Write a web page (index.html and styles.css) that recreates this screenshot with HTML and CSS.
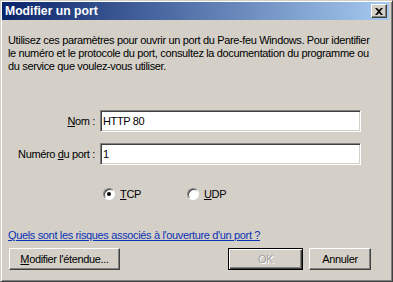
FILE: index.html
```html
<!DOCTYPE html>
<html lang="fr">
<head>
  <meta charset="UTF-8" />
  <title>Modifier un port</title>
  <link rel="stylesheet" href="styles.css">
</head>
<body>
<div class="window">
  <div class="titlebar">
    <span class="title">Modifier un port</span>
    <span class="close-btn">
      <svg width="8" height="7" viewBox="0 0 8 7"><path d="M0 0h2l2 2 2-2h2L5 3.5 8 7H6L4 5 2 7H0l3-3.5z" fill="#000"/></svg>
    </span>
  </div>

  <div class="content">
    <p class="intro">Utilisez ces paramètres pour ouvrir un port du Pare-feu Windows. Pour identifier le numéro et le protocole du port, consultez la documentation du programme ou du service que voulez-vous utiliser.</p>

    <div class="form">
      <label class="lbl"><u>N</u>om :</label>
      <div class="field">HTTP 80</div>
      <label class="lbl">Numéro <u>d</u>u port :</label>
      <div class="field">1</div>
    </div>

    <div class="radios">
      <span class="radio"><span class="dot checked"></span><span><u>T</u>CP</span></span>
      <span class="radio"><span class="dot"></span><span><u>U</u>DP</span></span>
    </div>

    <a href="#" class="link">Quels sont les risques associés à l'ouverture d'un port ?</a>

    <div class="buttons">
      <button class="btn wide"><u>M</u>odifier l'étendue...</button>
      <div class="right">
        <button class="btn default" disabled>OK</button>
        <button class="btn cancel">Annuler</button>
      </div>
    </div>
  </div>
</div>
</body>
</html>
```

FILE: styles.css
```css
body{
  margin:0;
  background:#d4d0c8;
  font-family:"Liberation Sans",Arial,sans-serif;
  font-size:11px;
  letter-spacing:-0.35px;
  color:#000;
}
.window{
  width:393px;
  height:282px;
  box-sizing:border-box;
  background:#d4d0c8;
  border-top:1px solid #d4d0c8;
  border-left:1px solid #d4d0c8;
  border-right:1px solid #404040;
  border-bottom:1px solid #404040;
  box-shadow:inset 1px 1px 0 #fff,inset -1px -1px 0 #808080;
  padding:1px 3px 3px 1px;
  display:flex;
  flex-direction:column;
}
.titlebar{
  height:18px;
  display:flex;
  align-items:center;
  justify-content:space-between;
  padding:0 2px 0 3px;
  background:linear-gradient(90deg,#0a246a 0%,#a6caf0 100%);
}
.title{color:#fff;font-weight:bold;font-size:12.2px;letter-spacing:0}
.close-btn{
  width:16px;height:14px;box-sizing:border-box;
  background:#d4d0c8;
  border-top:1px solid #fff;border-left:1px solid #fff;
  border-right:1px solid #404040;border-bottom:1px solid #404040;
  box-shadow:inset -1px -1px 0 #808080;
  display:flex;align-items:center;justify-content:center;
}
.content{padding:14px 6px 0 6px;flex:1;display:flex;flex-direction:column}
.intro{margin:0;line-height:13px;width:371px}
.form{
  margin-top:37px;
  display:grid;
  grid-template-columns:87px 261px;
  column-gap:5px;
  row-gap:11px;
  align-items:center;
}
.lbl{text-align:right}
.field{
  height:22px;box-sizing:border-box;
  background:#fff;
  border-top:1px solid #808080;border-left:1px solid #808080;
  border-right:1px solid #fff;border-bottom:1px solid #fff;
  box-shadow:inset 1px 1px 0 #404040,inset -1px -1px 0 #d4d0c8;
  padding:3px 2px;
  line-height:15px;
}
.radios{display:flex;gap:46px;margin:23px 0 0 95px}
.radio{display:flex;align-items:center;gap:5px}
.dot{
  width:12px;height:12px;box-sizing:border-box;border-radius:50%;
  background:#fff;
  border:1px solid;border-color:#808080 #fff #fff #808080;
  box-shadow:inset 1px 1px 0 #404040;
  display:flex;align-items:center;justify-content:center;
}
.dot.checked::after{content:"";width:4px;height:4px;border-radius:50%;background:#000}
.link{color:#0a32b4;margin-top:29px;align-self:flex-start}
.buttons{display:flex;justify-content:space-between;margin-top:7px}
.right{display:flex;gap:6px;margin-right:12px}
.btn{
  font:inherit;letter-spacing:inherit;
  height:22px;min-width:62px;
  background:#d4d0c8;
  border:1px solid;border-color:#fff #404040 #404040 #fff;
  box-shadow:inset -1px -1px 0 #808080;
  padding:0 6px;
  color:#000;
}
.btn.wide{width:111px;margin-left:1px}
.btn.default{width:75px;border:1px solid #000;box-shadow:inset 1px 1px 0 #fff,inset -1px -1px 0 #404040,inset -2px -2px 0 #808080;color:#a0a0a0;text-shadow:1px 1px 0 #fff}
u{text-decoration:underline}
```
